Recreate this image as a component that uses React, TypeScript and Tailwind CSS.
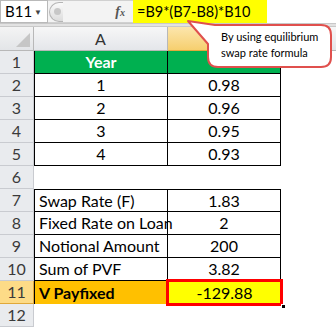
import React from "react";

const rows: { n: number; a: string; b: string; kind: string }[] = [
  { n: 1, a: "Year", b: "", kind: "head" },
  { n: 2, a: "1", b: "0.98", kind: "data" },
  { n: 3, a: "2", b: "0.96", kind: "data" },
  { n: 4, a: "3", b: "0.95", kind: "data" },
  { n: 5, a: "4", b: "0.93", kind: "data" },
  { n: 6, a: "", b: "", kind: "empty" },
  { n: 7, a: "Swap Rate (F)", b: "1.83", kind: "label" },
  { n: 8, a: "Fixed Rate on Loan", b: "2", kind: "label" },
  { n: 9, a: "Notional Amount", b: "200", kind: "label" },
  { n: 10, a: "Sum of PVF", b: "3.82", kind: "label" },
  { n: 11, a: "V Payfixed", b: "-129.88", kind: "result" },
  { n: 12, a: "", b: "", kind: "empty" },
];

export default function App() {
  return (
    <div
      className="relative w-[336px] h-[327px] overflow-hidden bg-white text-black"
      style={{ fontFamily: "Lato, 'Open Sans', sans-serif" }}
    >
      {/* formula bar */}
      <div className="flex h-[24px] items-stretch border-b border-[#c8c8c8] bg-white">
        <div className="flex w-[48px] items-center justify-between border border-[#b9b9b9] bg-white pl-[4px] pr-[5px] text-[15px] leading-none">
          <span>B11</span>
          <span className="text-[8px] text-[#444]">▼</span>
        </div>
        <div className="flex w-[85px] items-center border-y border-[#d0d0d0] bg-[#f3f3f3]">
          <div className="ml-[1px] h-[20px] w-[14px] rounded-l-full border-l border-y border-[#b5b5b5] bg-gradient-to-b from-[#fafafa] to-[#dcdcdc] flex items-center justify-center">
            <div className="ml-[2px] h-[7px] w-[7px] rounded-full bg-[#c7c7c7]" />
          </div>
          <div className="flex-1" />
          <div
            className="mr-[8px] text-[14px] italic font-bold text-[#555]"
            style={{ fontFamily: "'Liberation Serif', serif" }}
          >
            f<span className="text-[10px]">x</span>
          </div>
        </div>
        <div className="flex w-[134px] items-center bg-[#ffff00] pl-[4px] text-[14.5px]">
          =B9*(B7-B8)*B10
        </div>
        <div className="flex-1 bg-white" />
      </div>
      <div className="h-[3px] bg-[#e2e2e2] border-b border-[#c9c9c9]" />

      {/* sheet */}
      <div className="grid grid-cols-[34px_134px_113px_55px] grid-rows-[24px_repeat(12,23px)]">
        {/* header row */}
        <div className="relative border-r border-b border-[#b8b8b8] bg-gradient-to-b from-[#f4f4f4] to-[#e3e5e8]">
          <div
            className="absolute bottom-[3px] right-[3px] h-[14px] w-[14px] bg-[#c6c6c6]"
            style={{ clipPath: "polygon(100% 0, 100% 100%, 0 100%)" }}
          />
        </div>
        <div className="flex items-center justify-center border-r border-b border-[#b8b8b8] bg-gradient-to-b from-[#f7f7f7] to-[#e4e6ea] text-[16px] text-[#333]">
          A
        </div>
        <div className="border-r border-b border-[#e2a93b] bg-gradient-to-b from-[#fce6ac] to-[#f6cf6e]" />
        <div className="border-b border-[#b8b8b8] bg-gradient-to-b from-[#f7f7f7] to-[#e4e6ea]" />

        {rows.map((r) => {
          const hdrCls =
            r.kind === "result"
              ? "bg-[#fddb87] border-[#e0a83a]"
              : "bg-[#e9ebee] border-[#c9cbd0]";
          let aCls = "";
          let bCls = "";
          if (r.kind === "head") {
            aCls =
              "bg-[#00b050] text-white font-bold justify-center border-l border-r border-b border-black";
            bCls = "bg-[#00b050] border-r border-b border-black";
          } else if (r.kind === "data") {
            aCls = "justify-center border-l border-r border-b border-black";
            bCls = "justify-center border-r border-b border-black";
          } else if (r.kind === "label") {
            aCls =
              "justify-start pl-[4px] border-l border-r border-b border-black" +
              (r.n === 7 ? " border-t" : "");
            bCls =
              "justify-center border-r border-b border-black" +
              (r.n === 7 ? " border-t" : "");
          } else if (r.kind === "result") {
            aCls =
              "bg-[#ffc000] font-bold justify-start pl-[4px] border-l border-black";
            bCls =
              "relative bg-[#ffff00] justify-center outline outline-[3px] outline-[#ff0000] -outline-offset-[1px] z-10";
          }
          return (
            <React.Fragment key={r.n}>
              <div
                className={`flex items-center justify-center border-r border-b text-[16px] text-[#3a3a3a] ${hdrCls}`}
              >
                {r.n}
              </div>
              <div className={`flex items-center whitespace-nowrap text-[16px] ${aCls}`}>
                {r.a}
              </div>
              <div className={`flex items-center text-[16px] ${bCls}`}>
                {r.b}
                {r.kind === "result" && (
                  <div className="absolute right-[-5px] bottom-[-5px] h-[5px] w-[5px] bg-black border border-white" />
                )}
              </div>
              <div className="bg-white" />
            </React.Fragment>
          );
        })}
      </div>

      {/* callout */}
      <svg
        className="absolute left-0 top-0 z-20"
        width="336"
        height="80"
        viewBox="0 0 336 80"
      >
        <path
          d="M188 21 L215 25 L321 25 Q331 25 331 35 L331 57 Q331 67 321 67 L218 67 Q208 67 208 57 L208 44 Z"
          fill="#ffffff"
          stroke="#e0504d"
          strokeWidth="2"
          strokeLinejoin="round"
        />
      </svg>
      <div
        className="absolute left-[221px] top-[29px] z-30 text-[11px] leading-[16px] text-black"
        style={{ fontFamily: "Lato, sans-serif" }}
      >
        <div>By using equilibrium</div>
        <div>swap rate formula</div>
      </div>
    </div>
  );
}
